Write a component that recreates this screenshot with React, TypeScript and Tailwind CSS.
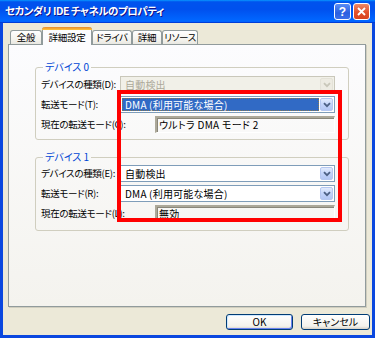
import React from "react";

const jp =
  "[font-family:'Noto_Sans_CJK_JP','Noto_Sans',sans-serif] [font-feature-settings:'palt']";

const small = "text-[9.5px] tracking-[-0.3px] leading-none whitespace-nowrap";

function Chevron({ color }: { color: string }) {
  return (
    <svg width="8" height="6" viewBox="0 0 8 6">
      <path d="M1 1.2 L4 4.2 L7 1.2" fill="none" stroke={color} strokeWidth="1.8" />
    </svg>
  );
}

function Combo({
  text,
  selected,
  disabled,
}: {
  text: string;
  selected?: boolean;
  disabled?: boolean;
}) {
  return (
    <div
      className={`flex h-[17px] w-[215px] shrink-0 border p-[1px] ${
        disabled ? "border-[#C9C7BA] bg-[#F1F0E8]" : "border-[#7F9DB9] bg-white"
      }`}
    >
      <div className="flex min-w-0 flex-1 items-center pr-[1px]">
        {selected ? (
          <div className="flex h-full w-full items-center whitespace-nowrap border border-dotted border-[#8A7A50] bg-[#316AC5] pl-[2px] text-[10px] leading-none tracking-[0.2px] text-white">
            {text}
          </div>
        ) : (
          <span
            className={`whitespace-nowrap pl-[3px] text-[10px] leading-none tracking-[0.2px] ${
              disabled ? "text-[#ACA899]" : "text-black"
            }`}
          >
            {text}
          </span>
        )}
      </div>
      <div
        className={`flex w-[13px] items-center justify-center rounded-[2px] border ${
          disabled
            ? "border-[#E4E2D8] bg-[#EDEBE2]"
            : "border-[#B5C7F0] bg-[linear-gradient(180deg,#E3ECFD,#C3D4FA_50%,#B3C6F3)]"
        }`}
      >
        <Chevron color={disabled ? "#C9C7BA" : "#4D6185"} />
      </div>
    </div>
  );
}

function ReadBox({ text }: { text: string }) {
  return (
    <div className="flex h-[17px] w-[180px] shrink-0 items-center whitespace-nowrap border-t-2 border-l-2 border-t-[#ACA899] border-l-[#ACA899] border-b border-r border-b-white border-r-white pl-[2px] text-[10px] leading-none tracking-[0.3px] text-black shadow-[inset_1px_1px_0_#8A877A]">
      {text}
    </div>
  );
}

function Row({ label, children, labelW }: { label: string; children: React.ReactNode; labelW: string }) {
  return (
    <div className="flex h-[17px] items-center">
      <div className={`${labelW} ${small} shrink-0 text-black`}>{label}</div>
      {children}
    </div>
  );
}

function Group({
  title,
  children,
  cls,
}: {
  title: string;
  children: React.ReactNode;
  cls: string;
}) {
  return (
    <fieldset className={`w-[314px] rounded-[3px] border border-[#D0CEBF] pl-[5px] pr-[12px] ${cls}`}>
      <legend className="ml-[2px] px-[2px] text-[10px] leading-[12px] text-[#0046D5]">{title}</legend>
      <div className="flex flex-col gap-[3px]">{children}</div>
    </fieldset>
  );
}

function Tab({ label, w, active }: { label: string; w: string; active?: boolean }) {
  if (active) {
    return (
      <div
        className={`${w} relative z-10 -mb-[1px] flex h-[18px] flex-col rounded-t-[3px] border-x border-[#919B9C] bg-[#FCFCFE]`}
      >
        <div className="-mx-[1px] h-[3px] rounded-t-[3px] bg-[linear-gradient(180deg,#E68B2C,#FFC73C)]" />
        <div className={`flex flex-1 items-center justify-center ${small} text-black`}>{label}</div>
      </div>
    );
  }
  return (
    <div
      className={`${w} flex h-[14px] items-center justify-center rounded-t-[3px] border border-b-0 border-[#919B9C] bg-[linear-gradient(180deg,#FFFFFF,#F3F2EC_70%,#E9E8E1)] ${small} text-black`}
    >
      {label}
    </div>
  );
}

export default function App() {
  return (
    <div className={`${jp} relative flex h-[338px] w-[375px] flex-col overflow-hidden bg-[#0A47DF]`}>
      {/* title bar */}
      <div className="flex h-[23px] shrink-0 items-center bg-[linear-gradient(180deg,#0997FF,#0053EE_8%,#0050EE_40%,#0066FF_88%,#0066FF_93%,#005BFF_95%,#003DD7_96%,#003DD7)] pl-[5px] pr-[5px]">
        <div className="flex-1 whitespace-nowrap text-[10.5px] font-bold leading-none tracking-[-0.5px] text-white [text-shadow:1px_1px_0_#0F1089]">
          セカンダリ IDE チャネルのプロパティ
        </div>
        <div className="flex gap-[2px]">
          <div className="flex h-[17px] w-[17px] items-center justify-center rounded-[3px] border border-white bg-[linear-gradient(180deg,#5B8DF5,#2A5FE0_60%,#3B6FEA)] text-[12px] font-bold leading-none text-white [font-family:'Liberation_Sans',sans-serif]">
            ?
          </div>
          <div className="flex h-[17px] w-[17px] items-center justify-center rounded-[3px] border border-white bg-[linear-gradient(180deg,#F08A66,#E2502C_55%,#D8431F)]">
            <svg width="9" height="9" viewBox="0 0 9 9">
              <path d="M1 1 L8 8 M8 1 L1 8" stroke="white" strokeWidth="1.8" />
            </svg>
          </div>
        </div>
      </div>

      {/* body */}
      <div className="mx-[3px] mb-[3px] flex flex-1 flex-col bg-[#ECE9D8] pl-[5px] pt-[4px]">
        {/* tabs */}
        <div className="flex h-[17px] items-end pl-[2px]">
          <Tab label="全般" w="w-[32px]" />
          <Tab label="詳細設定" w="w-[50px]" active />
          <Tab label="ドライバ" w="w-[40px]" />
          <Tab label="詳細" w="w-[30px]" />
          <Tab label="リソース" w="w-[36px]" />
        </div>
        {/* panel */}
        <div className="flex h-[263px] w-[358px] flex-col border border-[#919B9C] bg-[linear-gradient(180deg,#FCFCFE,#F4F3EE)] pl-[26px] pt-[16px] shadow-[1px_1px_0_#D0CEBF]">
          <Group title="デバイス 0" cls="pb-[6px] pt-[3px]">
            <Row label="デバイスの種類(D):" labelW="w-[79px]">
              <Combo text="自動検出" disabled />
            </Row>
            <Row label="転送モード(T):" labelW="w-[79px]">
              <Combo text="DMA (利用可能な場合)" selected />
            </Row>
            <Row label="現在の転送モード(C):" labelW="w-[114px]">
              <ReadBox text="ウルトラ DMA モード 2" />
            </Row>
          </Group>
          <Group title="デバイス 1" cls="mt-[11px] pb-[8px] pt-[2px]">
            <Row label="デバイスの種類(E):" labelW="w-[79px]">
              <Combo text="自動検出" />
            </Row>
            <Row label="転送モード(R):" labelW="w-[79px]">
              <Combo text="DMA (利用可能な場合)" />
            </Row>
            <Row label="現在の転送モード(L):" labelW="w-[114px]">
              <ReadBox text="無効" />
            </Row>
          </Group>
        </div>
        {/* buttons */}
        <div className="mt-[7px] flex justify-end gap-[8px] pr-[2px]">
          <button className="h-[16px] w-[67px] rounded-[3px] border border-[#003C74] bg-[linear-gradient(180deg,#FFFFFF,#F3F2EC_80%,#D6D0C5)] text-[10px] leading-none text-black shadow-[inset_1px_1px_0_#CEE7FF,inset_-1px_-1px_0_#6982EE]">
            OK
          </button>
          <button className="h-[16px] w-[69px] rounded-[3px] border border-[#003C74] bg-[linear-gradient(180deg,#FFFFFF,#F3F2EC_80%,#D6D0C5)] text-[10px] leading-none text-black">
            キャンセル
          </button>
        </div>
      </div>

      {/* red annotation rectangle */}
      <div className="pointer-events-none absolute left-[117px] top-[90px] h-[132px] w-[225px] border-[4px] border-[#FF0000]" />
    </div>
  );
}
